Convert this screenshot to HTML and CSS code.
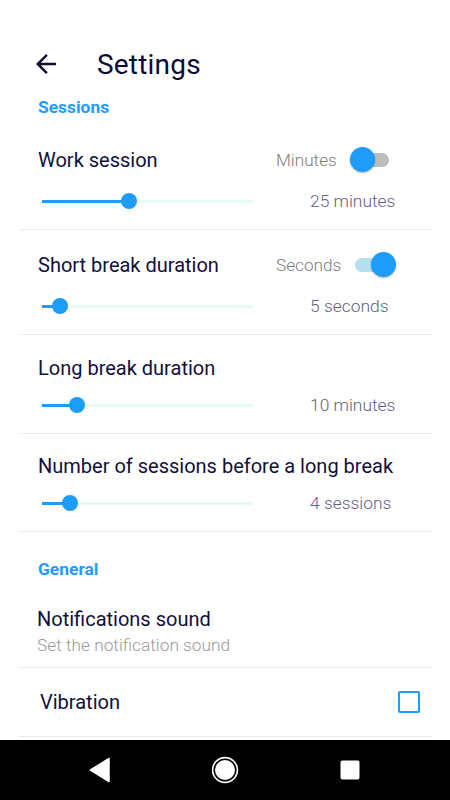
FILE: index.html
```html
<!DOCTYPE html>
<html>
<head>
<meta charset="utf-8">
<link rel="stylesheet" href="styles.css">
</head>
<body>
<div class="screen">
  <div class="content">
    <header class="header">
      <svg class="back" width="30" height="30" viewBox="0 0 24 24"><path d="M20 11H7.83l5.59-5.59L12 4l-8 8 8 8 1.41-1.41L7.83 13H20v-2z"/></svg>
      <h1 class="title">Settings</h1>
    </header>

    <div class="section-label">Sessions</div>
    <div class="list">
      <div class="item item--toggle">
        <div class="row-title">
          <span class="item-title">Work session</span>
          <div class="unit">
            <span class="unit-label">Minutes</span>
            <span class="switch"><span class="switch-track"></span><span class="switch-thumb"></span></span>
          </div>
        </div>
        <div class="row-slider">
          <div class="slider" style="--v:41%"><span class="slider-thumb"></span></div>
          <span class="slider-value">25 minutes</span>
        </div>
      </div>

      <div class="item item--toggle">
        <div class="row-title">
          <span class="item-title">Short break duration</span>
          <div class="unit">
            <span class="unit-label">Seconds</span>
            <span class="switch switch--on"><span class="switch-track"></span><span class="switch-thumb"></span></span>
          </div>
        </div>
        <div class="row-slider">
          <div class="slider" style="--v:8.5%"><span class="slider-thumb"></span></div>
          <span class="slider-value">5 seconds</span>
        </div>
      </div>

      <div class="item">
        <div class="row-title">
          <span class="item-title">Long break duration</span>
        </div>
        <div class="row-slider">
          <div class="slider" style="--v:16.6%"><span class="slider-thumb"></span></div>
          <span class="slider-value">10 minutes</span>
        </div>
      </div>

      <div class="item item--last">
        <div class="row-title">
          <span class="item-title">Number of sessions before a long break</span>
        </div>
        <div class="row-slider">
          <div class="slider" style="--v:13.3%"><span class="slider-thumb"></span></div>
          <span class="slider-value">4 sessions</span>
        </div>
      </div>
    </div>

    <div class="section-label section-label--general">General</div>
    <div class="list list--general">
      <div class="item item--pref">
        <div class="item-title">Notifications sound</div>
        <div class="item-sub">Set the notification sound</div>
      </div>
      <div class="item item--check">
        <span class="item-title">Vibration</span>
        <span class="checkbox"></span>
      </div>
    </div>
  </div>

  <nav class="navbar">
    <div class="nav-cell">
      <svg width="22" height="26" viewBox="0 0 22 26"><polygon points="20,1.5 20,24.5 1.5,13" fill="#fff" stroke="#fff" stroke-width="1.5" stroke-linejoin="round"/></svg>
    </div>
    <div class="nav-cell">
      <svg width="28" height="28" viewBox="0 0 28 28"><circle cx="14" cy="14" r="12.4" fill="none" stroke="#fff" stroke-width="1.6"/><circle cx="14" cy="14" r="10" fill="#fff"/></svg>
    </div>
    <div class="nav-cell">
      <svg width="20" height="20" viewBox="0 0 20 20"><rect x="0.5" y="0.5" width="19" height="19" rx="2" fill="#fff"/></svg>
    </div>
  </nav>
</div>
</body>
</html>
```

FILE: styles.css
```css
* { box-sizing: border-box; }
html, body { margin: 0; padding: 0; background: #fff; }
body { font-family: Roboto, "Noto Sans", sans-serif; color: #10103a; }

.screen { width: 450px; height: 800px; display: flex; flex-direction: column; overflow: hidden; }
.content { flex: 1; overflow: hidden; }

.header { display: flex; align-items: center; height: 56px; margin-top: 36px; padding-left: 31px; }
.back { fill: #0f0f35; flex: none; }
.title { margin: 0 0 0 36px; font-size: 28px; font-weight: 400; color: #0c0c3a; letter-spacing: 0.2px; }

.section-label { margin-top: 5px; padding-left: 38px; line-height: 20px; font-size: 17.4px; font-weight: 700; color: #1e9cfc; }
.section-label--general { margin-top: 27px; }

.list { margin: 8px 18px 0 19px; }
.list--general { margin-top: 0; }

.item { padding: 21px 36px 16px 19px; border-bottom: 1px solid #ececec; }
.item--last { padding-top: 20px; }

.row-title { display: flex; align-items: center; height: 24px; }
.item--toggle .row-title { height: 28px; }
.item-title { font-size: 20px; line-height: 24px; color: #10103a; white-space: nowrap; }

.unit { margin-left: auto; display: flex; align-items: center; }
.unit-label { width: 74px; font-size: 17.2px; font-weight: 300; color: #7d7d7d; }

.switch { position: relative; width: 46px; height: 26px; display: block; }
.switch-track { position: absolute; left: 5px; top: 6px; width: 34px; height: 14px; border-radius: 7px; background: #bdbdbd; }
.switch-thumb { position: absolute; left: 0; top: 0; width: 25px; height: 25px; border-radius: 50%; background: #1e9cfc; box-shadow: 0 1px 2px rgba(0,0,0,0.3); }
.switch--on .switch-track { background: #b5e0f3; }
.switch--on .switch-thumb { left: 21px; }

.row-slider { display: flex; align-items: center; height: 24px; margin-top: 13px; }
.item--toggle .row-slider { margin-top: 15px; }
.slider { position: relative; width: 211px; height: 24px; margin-left: 4px; flex: none;
  background: linear-gradient(to right, #1e9cfc 0, #1e9cfc var(--v), #e7fbf0 var(--v), #e7fbf0 100%) no-repeat left center / 100% 3px; }
.slider-thumb { position: absolute; top: 4px; left: var(--v); width: 16px; height: 16px; margin-left: -8px; border-radius: 50%; background: #1e9cfc; }
.slider-value { margin-left: 57px; font-size: 17.4px; font-weight: 300; color: #5f5f82; white-space: nowrap; }

.item--pref { padding: 28px 12px 12px 18px; }
.item--pref .item-title { line-height: 24px; }
.item-sub { margin-top: 4px; line-height: 20px; font-size: 17.3px; font-weight: 300; color: #9a9a9a; }

.item--check { display: flex; align-items: center; padding: 22px 12px 22px 21px; height: 69px; }
.checkbox { margin-left: auto; width: 22px; height: 22px; border: 2px solid #1e9cfc; border-radius: 2px; }

.navbar { height: 60px; background: #000; display: flex; justify-content: center; align-items: center; flex: none; }
.nav-cell { width: 125px; display: flex; justify-content: center; align-items: center; }
.nav-cell svg { display: block; }
```
